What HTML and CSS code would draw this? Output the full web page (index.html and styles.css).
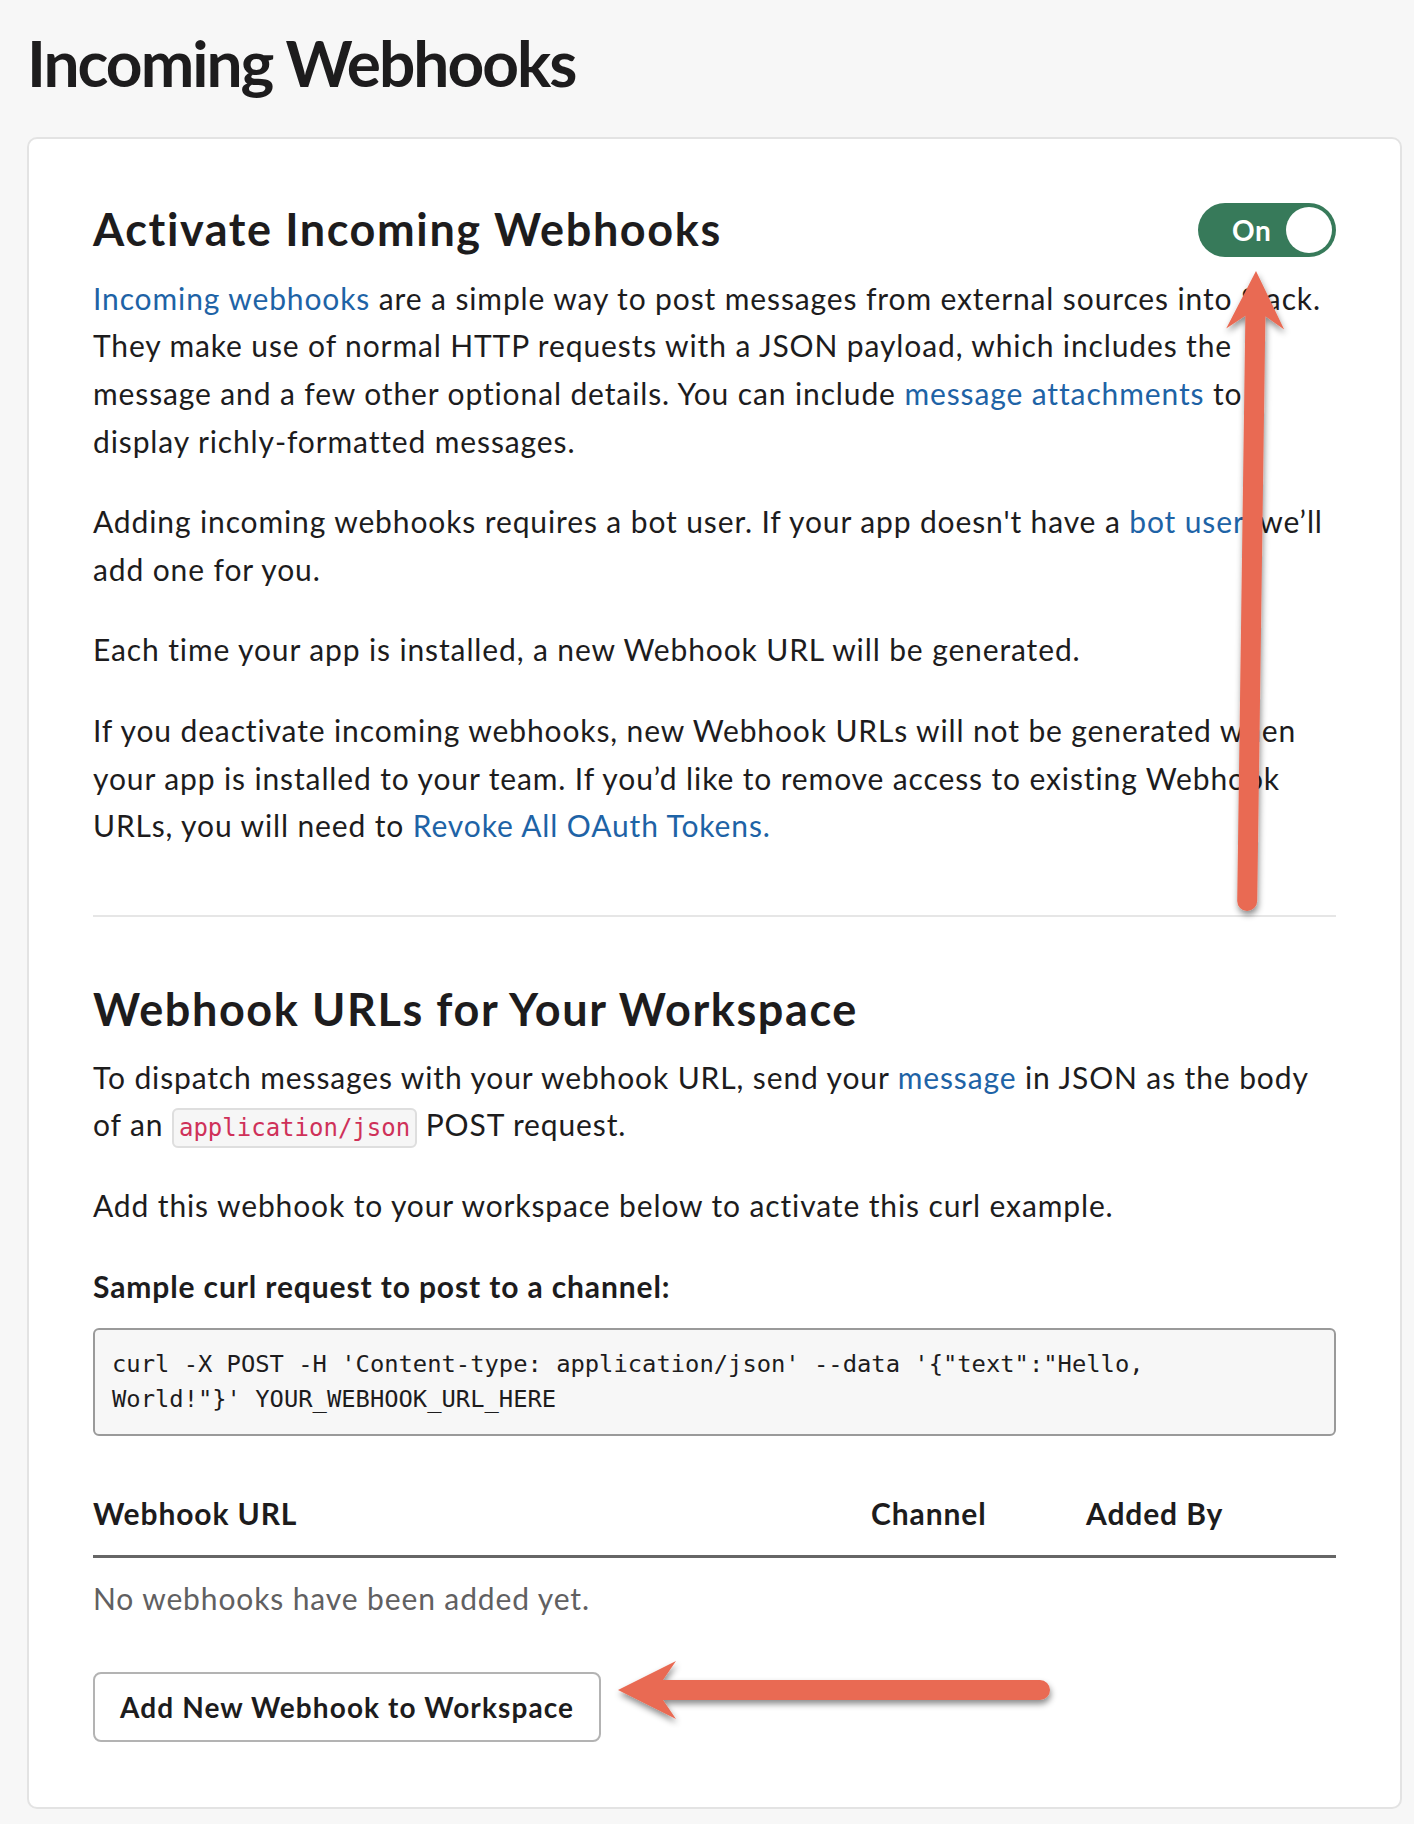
FILE: index.html
```html
<!DOCTYPE html>
<html lang="en">
<head>
<meta charset="utf-8">
<title>Incoming Webhooks</title>
<link rel="stylesheet" href="styles.css">
</head>
<body>
<div class="page">
  <h1 class="page-title">Incoming Webhooks</h1>
  <div class="card">
    <section class="sec sec-activate">
      <div class="sec-head">
        <h2>Activate Incoming Webhooks</h2>
        <div class="toggle"><span class="toggle-label">On</span><span class="knob"></span></div>
      </div>
      <p><a href="#">Incoming webhooks</a> are a simple way to post messages from external sources into Slack. They make use of normal HTTP requests with a JSON payload, which includes the message and a few other optional details. You can include <a href="#">message attachments</a> to display richly-formatted messages.</p>
      <p>Adding incoming webhooks requires a bot user. If your app doesn't have a <a href="#">bot user</a>, we’ll add one for you.</p>
      <p>Each time your app is installed, a new Webhook URL will be generated.</p>
      <p class="last">If you deactivate incoming webhooks, new Webhook URLs will not be generated when your app is installed to your team. If you’d like to remove access to existing Webhook URLs, you will need to <a href="#">Revoke All OAuth Tokens.</a></p>
    </section>
    <section class="sec sec-urls">
      <div class="sec-head">
        <h2>Webhook URLs for Your Workspace</h2>
      </div>
      <p>To dispatch messages with your webhook URL, send your <a href="#">message</a> in JSON as the body of an <code class="inline">application/json</code> POST request.</p>
      <p class="gap-more">Add this webhook to your workspace below to activate this curl example.</p>
      <p class="label">Sample curl request to post to a channel:</p>
      <pre class="codeblock">curl -X POST -H 'Content-type: application/json' --data '{"text":"Hello,
World!"}' YOUR_WEBHOOK_URL_HERE</pre>
      <div class="table">
        <div class="th">Webhook URL</div>
        <div class="th">Channel</div>
        <div class="th">Added By</div>
        <div class="empty">No webhooks have been added yet.</div>
      </div>
      <button class="btn" type="button">Add New Webhook to Workspace</button>
    </section>
  </div>
</div>
<svg class="overlay" width="1414" height="1824" viewBox="0 0 1414 1824" aria-hidden="true">
  <defs>
    <filter id="sh" x="-20%" y="-20%" width="140%" height="140%">
      <feDropShadow dx="1" dy="4" stdDeviation="3" flood-color="#000" flood-opacity="0.45"/>
    </filter>
  </defs>
  <g filter="url(#sh)" fill="#e96a53">
    <path transform="translate(1256 271) rotate(90.8)" d="M0 0 L58 -29 L45 -10 L630 -10 A10 10 0 0 1 630 10 L45 10 L58 29 Z"/>
    <path transform="translate(618 1690)" d="M0 0 L58 -29 L45 -10 L422 -10 A10 10 0 0 1 422 10 L45 10 L58 29 Z"/>
  </g>
</svg>
</body>
</html>
```

FILE: styles.css
```css
html, body {
  margin: 0;
  padding: 0;
}

body {
  position: relative;
  width: 1414px;
  min-height: 1824px;
  background: #f7f7f7;
  font-family: Lato, "Noto Sans", sans-serif;
  color: #1d1c1d;
}

.page {
  padding: 25px 12px 17px 27px;
}

.page-title {
  margin: 0 0 35px;
  font-size: 64px;
  line-height: 1.2;
  font-weight: 700;
  letter-spacing: -2px;
}

.card {
  background: #fff;
  border: 2px solid #e3e3e3;
  border-radius: 10px;
  padding: 64px 64px 65px;
}

.sec-activate {
  padding-bottom: 65px;
  border-bottom: 2px solid #e6e6e6;
}

.sec-urls {
  padding-top: 66px;
}

.sec-head {
  display: flex;
  align-items: center;
  justify-content: space-between;
  margin-bottom: 18px;
}

h2 {
  margin: 0;
  font-size: 45px;
  line-height: 53px;
  font-weight: 700;
  letter-spacing: 1.6px;
}

p {
  margin: 0 0 33px;
  font-size: 30px;
  line-height: 47.6px;
  letter-spacing: 0.88px;
}

p.last {
  margin-bottom: 0;
}

p.gap-more {
  margin-top: 2px;
}

a {
  color: #1e63a6;
  text-decoration: none;
}

.toggle {
  display: flex;
  align-items: center;
  width: 138px;
  height: 54px;
  box-sizing: border-box;
  padding: 0 4px 0 34px;
  border-radius: 27px;
  background: #377a5a;
}

.toggle-label {
  color: #fff;
  font-size: 28px;
  font-weight: 700;
  line-height: 1;
  letter-spacing: 0.5px;
}

.knob {
  margin-left: auto;
  width: 46px;
  height: 46px;
  border-radius: 50%;
  background: #fff;
}

code.inline {
  font-family: "DejaVu Sans Mono", monospace;
  font-size: 24px;
  line-height: 1;
  letter-spacing: 0;
  color: #cf3159;
  background: #f6f6f6;
  border: 2px solid #dedede;
  border-radius: 6px;
  padding: 4px 5px;
}

p.label {
  font-weight: 700;
  margin-bottom: 18px;
}

.codeblock {
  margin: 0;
  background: #f7f7f7;
  border: 2px solid #9a9a9a;
  border-radius: 6px;
  padding: 17px 17px;
  font-family: "DejaVu Sans Mono", monospace;
  font-size: 23.8px;
  line-height: 35px;
  color: #1d1c1d;
  white-space: pre;
}

.table {
  margin-top: 54px;
  display: grid;
  grid-template-columns: 778px 215px 1fr;
  font-size: 30px;
  line-height: 47.6px;
  letter-spacing: 0.88px;
}

.th {
  font-weight: 700;
  padding-bottom: 17px;
  border-bottom: 3px solid #666;
}

.empty {
  grid-column: 1 / -1;
  padding-top: 17px;
  color: #616061;
}

.btn {
  display: block;
  margin-top: 50px;
  height: 70px;
  padding: 0 25px;
  background: #fff;
  border: 2px solid #b3b3b3;
  border-radius: 8px;
  font-family: Lato, "Noto Sans", sans-serif;
  font-size: 28px;
  font-weight: 700;
  letter-spacing: 1.1px;
  color: #1d1c1d;
}

.overlay {
  position: absolute;
  top: 0;
  left: 0;
  pointer-events: none;
}
```
